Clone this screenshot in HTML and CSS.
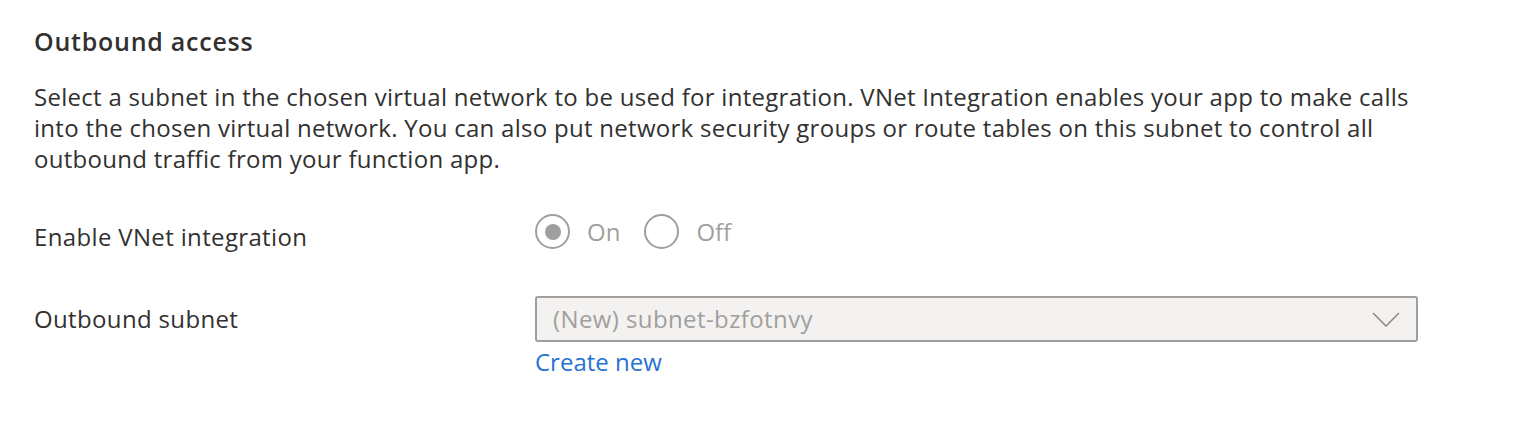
FILE: index.html
```html
<!DOCTYPE html>
<html lang="en">
<head>
<meta charset="utf-8">
<title>Outbound access</title>
<link rel="stylesheet" href="styles.css">
</head>
<body>
<section class="section">
  <h2 class="title">Outbound access</h2>
  <p class="desc">Select a subnet in the chosen virtual network to be used for integration. VNet Integration enables your app to make calls into the chosen virtual network. You can also put network security groups or route tables on this subnet to control all outbound traffic from your function app.</p>
  <div class="row row-radio">
    <div class="label">Enable VNet integration</div>
    <div class="control radios">
      <span class="radio checked"><span class="circle"></span><span class="rtext">On</span></span>
      <span class="radio"><span class="circle"></span><span class="rtext">Off</span></span>
    </div>
  </div>
  <div class="row row-select">
    <div class="label">Outbound subnet</div>
    <div class="control">
      <div class="select">
        <span class="value">(New) subnet-bzfotnvy</span>
        <svg class="chev" width="28" height="15" viewBox="0 0 28 15"><path d="M1 1 L14 14 L27 1" fill="none" stroke="#8a8886" stroke-width="1.5"/></svg>
      </div>
      <a class="link" href="#">Create new</a>
    </div>
  </div>
</section>
</body>
</html>
```
FILE: styles.css
```css
html, body {
  margin: 0;
  padding: 0;
  background: #ffffff;
}
body {
  font-family: "Open Sans", "Noto Sans", sans-serif;
  color: #323130;
}
.section {
  padding: 25px 34px 0 34px;
  width: 1400px;
}
.title {
  margin: 0;
  font-size: 25px;
  font-weight: 600;
  line-height: 32px;
  letter-spacing: 0.75px;
}
.desc {
  margin: 24px 0 0 0;
  font-size: 24px;
  line-height: 31px;
  letter-spacing: 0.28px;
}
.row {
  display: grid;
  grid-template-columns: 501px 1fr;
  font-size: 24px;
  align-items: start;
}
.label {
  line-height: 30px;
  letter-spacing: 0.35px;
}
.row-radio {
  margin-top: 40px;
}
.row-radio .label {
  padding-top: 8px;
}
.radios {
  display: flex;
  align-items: center;
  gap: 24px;
}
.radio {
  display: flex;
  align-items: center;
  gap: 17px;
  color: #a19f9d;
  line-height: 30px;
}
.circle {
  width: 31px;
  height: 31px;
  border: 2px solid #a19f9d;
  border-radius: 50%;
  display: flex;
  align-items: center;
  justify-content: center;
}
.radio.checked .circle::after {
  content: "";
  width: 16px;
  height: 16px;
  border-radius: 50%;
  background: #a19f9d;
}
.row-select {
  margin-top: 44px;
}
.row-select .label {
  padding-top: 8px;
}
.select {
  height: 42px;
  border: 2px solid #a19f9d;
  border-radius: 3px;
  background: #f3f2f1;
  display: flex;
  align-items: center;
  justify-content: space-between;
  padding: 0 16px 0 16px;
  box-sizing: content-box;
  width: 847px;
  color: #a19f9d;
  line-height: 30px;
}
.value {
  letter-spacing: 0.4px;
}
.link {
  display: inline-block;
  margin-top: 5px;
  color: #2672d0;
  text-decoration: none;
  line-height: 30px;
}
```
